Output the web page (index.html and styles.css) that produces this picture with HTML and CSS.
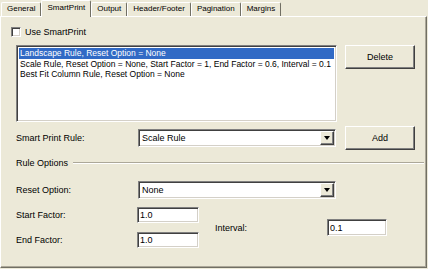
FILE: index.html
```html
<!DOCTYPE html>
<html lang="en">
<head>
  <meta charset="UTF-8" />
  <title>SmartPrint Options</title>
  <link rel="stylesheet" href="styles.css">
</head>
<body>
  <div class="tabs">
    <div class="tab">General</div>
    <div class="tab active">SmartPrint</div>
    <div class="tab">Output</div>
    <div class="tab">Header/Footer</div>
    <div class="tab">Pagination</div>
    <div class="tab">Margins</div>
  </div>

  <div class="panel">
    <label class="check-row">
      <span class="checkbox"></span>
      <span>Use SmartPrint</span>
    </label>

    <div class="list-row">
      <ul class="listbox">
        <li class="selected">Landscape Rule, Reset Option = None</li>
        <li>Scale Rule, Reset Option = None, Start Factor = 1, End Factor = 0.6, Interval = 0.1</li>
        <li>Best Fit Column Rule, Reset Option = None</li>
      </ul>
      <button class="btn">Delete</button>
    </div>

    <div class="field-row rule-row">
      <span class="field-label">Smart Print Rule:</span>
      <div class="combo">
        <span class="combo-text">Scale Rule</span>
        <span class="combo-arrow"></span>
      </div>
      <button class="btn">Add</button>
    </div>

    <div class="group-title">
      <span>Rule Options</span>
      <span class="etched"></span>
    </div>

    <div class="field-row">
      <span class="field-label">Reset Option:</span>
      <div class="combo">
        <span class="combo-text">None</span>
        <span class="combo-arrow"></span>
      </div>
    </div>

    <div class="factors">
      <span class="factor-label">Start Factor:</span>
      <input class="textbox" type="text" value="1.0" />
      <span class="interval-label">Interval:</span>
      <input class="textbox interval" type="text" value="0.1" />
      <span class="factor-label">End Factor:</span>
      <input class="textbox" type="text" value="1.0" />
    </div>
  </div>
</body>
</html>
```

FILE: styles.css
```css
/* Reset & base */
* {
  margin: 0;
  padding: 0;
  box-sizing: border-box;
}

body {
  font-family: 'Liberation Sans', Arial, sans-serif;
  font-size: 9px;
  color: #000;
  background-color: #ECE9D8;
  width: 428px;
  height: 269px;
  overflow: hidden;
}

/* Tab strip */
.tabs {
  display: flex;
  align-items: flex-end;
  height: 16px;
  padding-left: 1px;
  position: relative;
  z-index: 1;
}

.tab {
  height: 14px;
  padding: 0 5px;
  font-size: 8px;
  line-height: 12px;
  background-color: #ECE9D8;
  border-top: 1px solid #fff;
  border-left: 1px solid #fff;
  border-right: 1px solid #716F64;
  border-radius: 2px 2px 0 0;
}

.tab.active {
  height: 17px;
  margin-bottom: -1px;
  line-height: 14px;
}

/* Panel */
.panel {
  width: 427px;
  height: 252px;
  border-top: 1px solid #fff;
  border-left: 1px solid #fff;
  border-right: 1px solid #716F64;
  border-bottom: 1px solid #716F64;
  box-shadow: inset -1px -1px 0 #ACA899;
  padding: 9px 0 0 15px;
}

.check-row {
  display: flex;
  align-items: center;
  gap: 4px;
  height: 12px;
  margin-left: -5px;
}

.checkbox {
  width: 10px;
  height: 10px;
  background: #fff;
  border: 1px solid;
  border-color: #808080 #fff #fff #808080;
  box-shadow: inset 1px 1px 0 #404040, inset -1px -1px 0 #D4D0C8;
}

/* Sunken boxes */
.listbox,
.combo,
.textbox {
  background: #fff;
  border: 1px solid;
  border-color: #808080 #fff #fff #808080;
  box-shadow: inset 1px 1px 0 #404040, inset -1px -1px 0 #D4D0C8;
}

.list-row {
  display: flex;
  align-items: flex-start;
  margin-top: 7px;
}

.listbox {
  list-style: none;
  width: 321px;
  height: 77px;
  padding: 2px 2px;
  overflow: hidden;
  font-size: 8.5px;
}

.listbox li {
  height: 10.5px;
  line-height: 10.5px;
  padding-left: 1px;
  white-space: nowrap;
}

.listbox li.selected {
  background-color: #316AC5;
  color: #fff;
}

/* Buttons */
.btn {
  font-family: inherit;
  font-size: 9px;
  color: #000;
  width: 70px;
  height: 24px;
  margin-left: 8px;
  background-color: #ECE9D8;
  border: 1px solid;
  border-color: #fff #404040 #404040 #fff;
  box-shadow: inset -1px -1px 0 #808080;
}

/* Label + field rows */
.field-row {
  display: flex;
  align-items: center;
  height: 18px;
  margin-top: 6px;
}

.rule-row {
  height: 24px;
  margin-top: 4px;
}

.rule-row .btn {
  margin-left: 9px;
}

.field-label {
  width: 122px;
}

.combo {
  display: flex;
  align-items: center;
  width: 198px;
  height: 18px;
  padding: 1px 1px 1px 2px;
}

.combo-text {
  flex: 1;
  padding-left: 1px;
}

.combo-arrow {
  position: relative;
  width: 14px;
  height: 14px;
  background-color: #ECE9D8;
  border: 1px solid;
  border-color: #fff #404040 #404040 #fff;
  box-shadow: inset -1px -1px 0 #808080;
}

.combo-arrow::after {
  content: '';
  position: absolute;
  left: 3px;
  top: 4px;
  border-left: 3.5px solid transparent;
  border-right: 3.5px solid transparent;
  border-top: 4px solid #000;
}

/* Group heading with etched line */
.group-title {
  display: flex;
  align-items: center;
  gap: 5px;
  height: 24px;
  margin-top: 1px;
}

.etched {
  flex: 1;
  height: 2px;
  margin-right: 2px;
  border-top: 1px solid #ACA899;
  border-bottom: 1px solid #fff;
}

/* Factor inputs */
.factors {
  display: grid;
  grid-template-columns: 121px 62px 16px 112px 60px;
  grid-template-rows: 16px 16px;
  row-gap: 9px;
  align-items: center;
  margin-top: 8px;
}

.factor-label {
  grid-column: 1;
}

.textbox {
  font-family: inherit;
  font-size: 9px;
  width: 62px;
  height: 16px;
  padding: 0 2px;
  outline: none;
}

.interval-label {
  grid-column: 4;
  grid-row: 1 / 3;
}

.textbox.interval {
  grid-column: 5;
  grid-row: 1 / 3;
  width: 60px;
  height: 17px;
}
```
